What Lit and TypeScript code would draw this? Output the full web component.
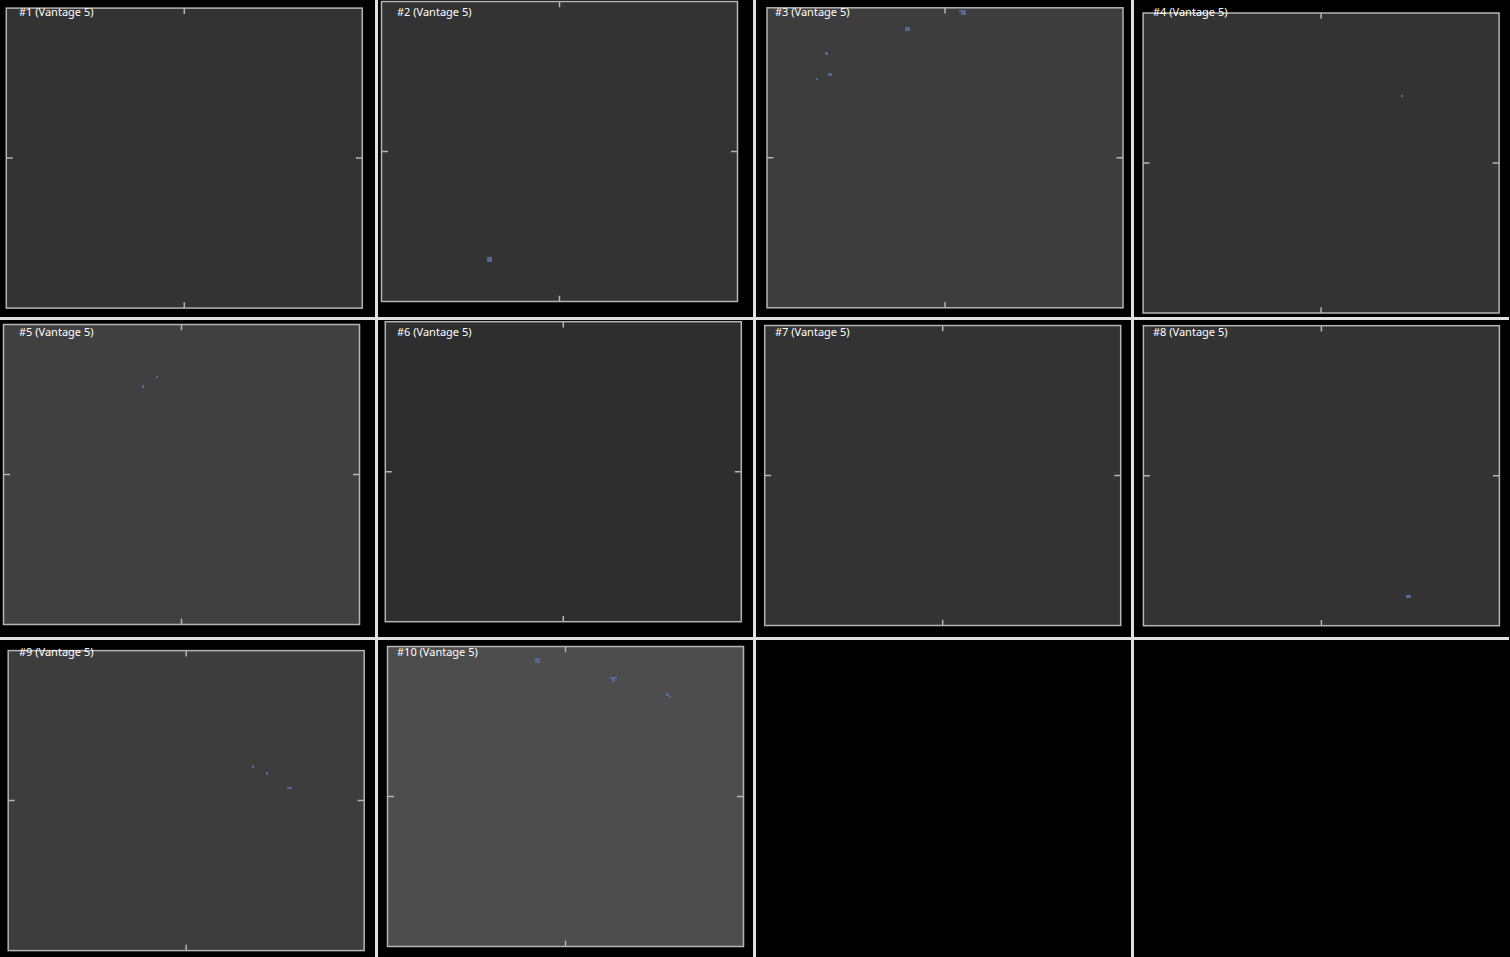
import { LitElement, html, svg, css } from "lit";
import { customElement, property } from "lit/decorators.js";

type Block = [x: number, y: number, w: number, h: number];

interface View {
  name: string;
  x: number;
  y: number;
  fill: string;
  blocks: Block[];
}

const FRAME_W = 356;
const FRAME_H = 300;
const TICK = 6.5;

const VIEWS: View[] = [
  { name: "#1 (Vantage 5)", x: 6.3, y: 8.1, fill: "#333333", blocks: [] },
  { name: "#2 (Vantage 5)", x: 3.5, y: 1.5, fill: "#333333", blocks: [[109, 257, 5, 5]] },
  {
    name: "#3 (Vantage 5)", x: 11, y: 7.8, fill: "#3d3d3d",
    blocks: [[203, 10, 7, 2], [205, 10, 5, 5], [149, 27, 5, 4], [69, 52, 3, 3], [72, 73, 4, 3], [60, 78, 2, 2]],
  },
  { name: "#4 (Vantage 5)", x: 9.1, y: 13, fill: "#333333", blocks: [[267, 95, 2, 2]] },
  { name: "#5 (Vantage 5)", x: 3.5, y: 4.5, fill: "#404040", blocks: [[142, 65, 2, 3], [156, 56, 2, 2]] },
  { name: "#6 (Vantage 5)", x: 7.3, y: 1.7, fill: "#2e2e2e", blocks: [] },
  { name: "#7 (Vantage 5)", x: 8.7, y: 5.5, fill: "#333333", blocks: [] },
  { name: "#8 (Vantage 5)", x: 9.4, y: 5.7, fill: "#333333", blocks: [[272, 275, 5, 3]] },
  { name: "#9 (Vantage 5)", x: 8.2, y: 10.6, fill: "#3d3d3d", blocks: [[252, 125, 2, 3], [266, 132, 2, 3], [287, 147, 5, 2]] },
  {
    name: "#10 (Vantage 5)", x: 9.5, y: 6.5, fill: "#4d4d4d",
    blocks: [[157, 18, 5, 5], [232, 37, 7, 2], [234, 37, 3, 5], [288, 53, 3, 3], [291, 56, 2, 2]],
  },
];

const CELLS = 12;

@customElement("map-view")
export class MapView extends LitElement {
  @property({ attribute: false }) view?: View;

  static styles = css`
    :host {
      display: grid;
      min-width: 0;
      min-height: 0;
      background: #000;
      overflow: hidden;
    }
    .plot,
    .caption {
      grid-area: 1 / 1;
    }
    .plot {
      display: block;
      width: 100%;
      height: 100%;
      min-height: 0;
    }
    .frame,
    .tick {
      stroke: #b4b4b4;
      stroke-width: 1.5;
    }
    .tick {
      fill: none;
    }
    .block {
      fill: #526996;
      shape-rendering: crispEdges;
    }
    .caption {
      margin: 0;
      padding: 4px 0 0 19px;
      align-self: start;
      z-index: 1;
      color: #fff;
      font: 11px/16px "Noto Sans", "Open Sans", sans-serif;
    }
  `;

  render() {
    const v = this.view;
    if (!v) return html``;
    const right = v.x + FRAME_W;
    const bottom = v.y + FRAME_H;
    const cx = v.x + FRAME_W / 2;
    const cy = v.y + FRAME_H / 2;
    const ticks =
      `M${cx} ${v.y}v${TICK - 0.7}M${cx} ${bottom}v${0.7 - TICK}` +
      `M${v.x} ${cy}h${TICK}M${right} ${cy}h${-TICK}`;
    return html`
      <svg class="plot" viewBox="0 0 375 317" preserveAspectRatio="xMinYMin meet" aria-hidden="true">
        <rect class="frame" x=${v.x} y=${v.y} width=${FRAME_W} height=${FRAME_H} fill=${v.fill}></rect>
        <path class="tick" d=${ticks}></path>
        ${v.blocks.map(([x, y, w, h]) => svg`<rect class="block" x=${x} y=${y} width=${w} height=${h}></rect>`)}
      </svg>
      <p class="caption">${v.name}</p>
    `;
  }
}

@customElement("app-root")
export class AppRoot extends LitElement {
  static styles = css`
    :host {
      display: block;
      height: 100vh;
      box-sizing: border-box;
      padding-right: 1px;
      background: #000;
    }
    .wall {
      display: grid;
      grid-template-columns: repeat(4, minmax(0, 1fr));
      grid-template-rows: repeat(3, minmax(0, 1fr));
      gap: 3px;
      height: 100%;
      background: #e0e0e0;
    }
  `;

  render() {
    return html`
      <main class="wall">
        ${Array.from({ length: CELLS }, (_, i) => html`<map-view .view=${VIEWS[i]}></map-view>`)}
      </main>
    `;
  }
}
